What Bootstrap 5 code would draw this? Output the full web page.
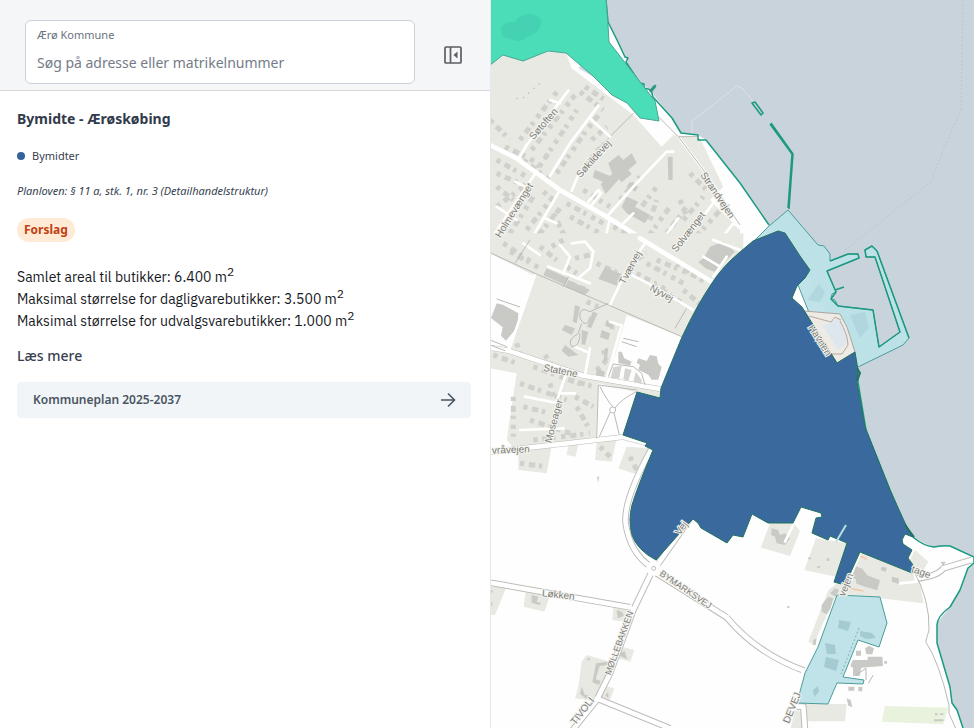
<!DOCTYPE html>
<html lang="da">
<head>
<meta charset="utf-8">
<meta name="viewport" content="width=device-width, initial-scale=1">
<title>Bymidte - Ærøskøbing</title>
<link href="https://cdn.jsdelivr.net/npm/bootstrap@5.3.0/dist/css/bootstrap.min.css" rel="stylesheet">
<style>
  body { font-family: "Noto Sans", "Open Sans", sans-serif; color: #374151; background: #fff; }
  .side-panel { flex: 0 0 calc(50% + 3px); }
  .panel-top { background: #f5f6f8; border-bottom: 1px solid #d6d8dc; padding: 20px 25px 6px; gap: 26px; }
  .search-box { border: 1px solid #cdd1d9; border-radius: 6px; padding: 6px 11px 8px; }
  .search-box label { font-size: 11px; line-height: 16px; color: #6b7280; }
  .search-box input { font-size: 14px; line-height: 24px; padding: 0; color: #374151; margin-top: 8px; }
  .search-box input::placeholder { color: #747b87; opacity: 1; }
  .search-box input:focus { outline: none; }
  .collapse-btn { width: 24px; height: 24px; line-height: 0; margin-top: 5px; }
  .panel-body { padding: 16px 19px 16px 17px; }
  .plan-title { font-size: 14px; line-height: 24px; font-weight: 700; margin-bottom: 16px; color: #323b4b; }
  .plan-kind { font-size: 11px; line-height: 18px; gap: 7px; margin-bottom: 17px; }
  .kind-dot { width: 8px; height: 8px; background: #35639b; }
  .plan-law { font-size: 11px; line-height: 18px; margin-bottom: 18px; }
  .plan-status { font-size: 12px; line-height: 18px; font-weight: 700; padding: 3px 7px; color: #bf4012; background: #ffead5; }
  .plan-facts { font-family: "IBM Plex Sans", Roboto, sans-serif; font-size: 14px; line-height: 22px; color: #15181d; margin: 24px 0 13px; }
  .plan-facts sup { font-size: 12px; line-height: 0; }
  .more-title { font-size: 14px; line-height: 22px; font-weight: 500; margin-bottom: 15px; }
  .plan-link { font-size: 12px; line-height: 20px; font-weight: 600; color: #4b5563; background: #f1f5f7; border-radius: 4px; padding: 8px 15px 8px 16px; }
  .map-pane { min-width: 0; border-left: 1px solid #e6e7ea; background: #fefefe; }
  .ground { fill: #e9e9e3; }
  .sea { fill: #c8d3dc; }
  .edge { fill: none; stroke: #bcbcb8; stroke-width: 17; stroke-linejoin: round; }
  .edge-wide { stroke-width: 20; }
  .street { fill: none; stroke: #fff; stroke-width: 8; stroke-linecap: round; stroke-linejoin: round; }
  .street-wide { stroke-width: 14; }
  .trail { fill: none; stroke: #bbb9b5; stroke-width: 3; }
  .house { fill: none; stroke: #d0d0cc; stroke-width: 15; stroke-dasharray: 13 14 19 11 10 17; }
  .block { fill: #c9c9c6; }
  .coast { fill: none; stroke: #1b9a80; stroke-width: 1.5; stroke-linejoin: round; }
  .harbour { fill: #bce1e7; fill-opacity: .95; stroke: #4b9d9b; stroke-width: 1; stroke-linejoin: round; }
  .map-names { font-family: "Liberation Sans", Arial, sans-serif; font-size: 10px; fill: #7c7c77; stroke: #f5f5f1; stroke-width: 2px; paint-order: stroke; text-anchor: middle; }
</style>
<script src="https://cdn.jsdelivr.net/npm/bootstrap@5.3.0/dist/js/bootstrap.bundle.min.js"></script>
</head>
<body>
<div class="d-flex vh-100 overflow-hidden">
  <aside class="side-panel d-flex flex-column bg-white">
    <header class="panel-top d-flex align-items-center">
      <div class="search-box flex-grow-1 bg-white d-flex flex-column">
        <label for="search">Ærø Kommune</label>
        <input id="search" type="text" class="border-0 w-100 bg-transparent" placeholder="Søg på adresse eller matrikelnummer">
      </div>
      <button type="button" class="collapse-btn btn p-0 border-0" aria-label="Skjul panel">
        <svg width="24" height="24" viewBox="0 0 24 24" fill="none" stroke="#5b5e63" stroke-width="1.700" aria-hidden="true"><rect x="4" y="4" width="16" height="16" rx="1"/><path d="M9.500 4v16"/><path d="M16.500 8.500v7L12.500 12z" fill="#5b5e63" stroke="none"/></svg>
      </button>
    </header>
    <main class="panel-body flex-grow-1 overflow-auto">
      <h1 class="plan-title">Bymidte - Ærøskøbing</h1>
      <div class="plan-kind d-flex align-items-center"><span class="kind-dot rounded-circle"></span><span>Bymidter</span></div>
      <p class="plan-law fst-italic">Planloven: § 11 a, stk. 1, nr. 3 (Detailhandelstruktur)</p>
      <div class="d-flex"><span class="plan-status rounded-pill">Forslag</span></div>
      <p class="plan-facts">Samlet areal til butikker: 6.400 m<sup>2</sup><br>Maksimal størrelse for dagligvarebutikker: 3.500 m<sup>2</sup><br>Maksimal størrelse for udvalgsvarebutikker: 1.000 m<sup>2</sup></p>
      <h2 class="more-title">Læs mere</h2>
      <a href="#kommuneplan" class="plan-link d-flex align-items-center justify-content-between text-decoration-none">
        <span>Kommuneplan 2025-2037</span>
        <svg width="16" height="16" viewBox="0 0 16 16" fill="none" stroke="#4b5563" stroke-width="1.6" aria-hidden="true"><path d="M1 8h13M8 1.500 14.500 8 8 14.500"/></svg>
      </a>
    </main>
  </aside>

  <section class="map-pane flex-grow-1" aria-label="Kort">
    <svg class="d-block w-100 h-100" viewBox="491 0 483 728" preserveAspectRatio="xMidYMid slice" role="img" aria-label="Kort over Ærøskøbing">
      <!-- north-western quarter -->
      <g transform="translate(490 0) scale(.333333)">
        <path class="ground" d="M0 195 45 165 100 183 170 155 228 158 245 205 430 345 515 440 550 405 630 415 700 560 660 600 750 690V760H0z"/>
        <path fill="#cfdbe3" d="m265 205 15-15 35 20 45 48z"/>
        <path class="house" d="M90 420 205 270M125 450 255 285M148 500 225 385 260 330M200 520 290 390 330 340M270 275 340 330M285 260 345 300M45 440 120 475 150 500M20 480 110 530M20 520 110 560M20 620 100 560M20 560 70 600M60 700 130 590M110 690 190 590M130 725 210 625M230 610 340 670M280 570 360 620M240 650 330 700M190 640 220 700M270 520 340 430M305 420 350 380M160 575 190 600M0 360 60 420M100 480 185 545M370 680 480 735M440 640 500 560M480 660 500 600M460 730 540 620M530 700 590 620M580 660 640 590M600 730 700 620M620 740 690 700M600 520 660 580M390 600 450 530M570 600 590 650M180 745 230 690"/>
        <path class="block" d="m355 490 30-25 15 15 25-20 15 28-25 22 10 12-30 25-8-10-40 45-15-30 35-30zM315 510l55 22-12 22-50-22zM410 590l35 15-10 15 45 25-15 25-55-30-15-20zM533 470h15v70h-13zM420 545l25 15-10 15-25-15z"/>
        <path fill="none" stroke="#cbcbc7" stroke-width="5" stroke-dasharray="5 16" d="m78 295 20 0 60-52"/>
        <path class="trail" d="m325 445 105-105"/>
        <path class="street street-wide" d="m-10 430 90 45 130 95 140 80 160 100"/>
        <path class="street" d="m85 478 25-43 125-163M180 528l60-98 85-113M300 355l60 55M245 572l20-47 20-20M355 645l75-85 100-105 20 0M565 410l75 100 105 155M510 730l55-75M600 700l85-110 55-50M0 722l135-200M210 570 105 750M360 655l-15 65-45 30-40-20-25 10-20-10M295 605l30-35 8 10-28 35M400 670l30-30M165 655l35 15M20 620l60 40M75 545l30 15M180 300l30 10M690 720l40-50 30 20"/>
        <path class="trail" d="m505 350 60 60 75 100 110 165M565 410l60 0"/>
        <path fill="none" stroke="#d6d9da" stroke-width="5" d="m605 400v-40l110-90 30-15"/>
      </g>
      <!-- western quarter -->
      <g transform="translate(490 240) scale(.333333)">
        <path class="ground" d="M0-20h760V30L665 130 575 290 410 225 355 415 510 442 512 475 325 430 318 590 185 620 170 700 85 690 85 640 50 600 80 400 0 385V330l50 8 85-230L0 40zM320 610l60-15-15 70-50-5zM410 620l75 5-40 80-60-20zM235 615l30-5-8 40-27-5z"/>
        <path class="house" d="M40 10 130 70M60 35 150 85M150 20 200 60M185 20 220 0M255 55 300 45M230 80 260 100M165 100 290 150M320 70 385 100M420 70 470 40M440 100 530 150M470 70 580 130M500 60 620 110M560 70 650 130M580 150 640 200M490 135 580 190M10 345 80 370M130 380 280 435M240 420 310 440M90 430 230 480M70 470 70 590M100 500 180 520M120 540 240 580M130 600 300 580M260 500 300 570M180 430 190 470M255 470 310 500M80 310 90 340M165 345 185 375M340 330 350 360M320 390 350 360M90 670 170 680M330 620 360 650M420 650 440 690M360 260 395 260M290 185 325 200"/>
        <path class="block" d="m20 190 20 5 45 25-2 40-35 42-15-15 5-25-35-28zM385 335l10 0 8 20 22 10-5 12-35-8zM445 355l25 8 10-18 20 4 5 22 10 10-10 38-20 0-10-15-30-15 5-15-10-5zM345 82l50 20-15 35-55-20zM640 55l20-35 40-15 35 30-40 40-20 20-25-8-25-20zM170 85l65 30-10 20-65-30zM235 120l65 30-15 15-60-25zM255 195l15 5-10 50-12-5zM308 215l15 5-20 45-12-5zM225 255l30 10-10 20-30-15zM225 315l40 30-30 5-20-18zM275 270l20 5-10 40-10-2zM335 270l25 10-5 20-25-8zM345 325l10 0-5 40-10 0zM320 385l25 10-5 20-22-8zM350 240l20 10-5 15-20-8z"/>
        <path class="edge" d="M-5 322 55 332 280 407 510 447M-10 637l160-18 250-28 75 20"/>
        <path class="street street-wide" d="M450-5 665 125M-5 322l60 10 225 75 230 40M-10 637l160-18 250-28 75 20"/>
        <path class="street" d="M55 335 135 105M465 10l-50 70-55 115M415 100l60 30 135 80M285 405l15-80M255 320l35 15M350 415l45-160M360 245l35 12M220 100l20-50-30-35M245 10l40-5 25 30-10 50-30 25M175 80l125 50M105 470l90 18M90 570l130-5M215 460h40M225 410l-25 75M100 10l50 35M640 50l50 30M670 110l40-60M670 0l80 30"/>
        <path class="trail" d="M0 38l135 62 225 97 215 93M120 0 75 70M20 177l70 24M0 300l50 20M0 315l45 17M400 295l45 10M395 305l45 15M590 205l-35 60M355 190l-55 25q-35-20-30 20 20 35 30-5M275 250l-10 30q-35 20-20 40 25 0 25-40M235 110l-15 30M325 435l-5 160M325 435l115 15M330 440q20 40 38 60l-40 90M440 455q-45 20-70 55l18 75"/>
        <circle cx="368" cy="510" r="9" fill="#fff" stroke="#bbb" stroke-width="3"/>
        <path fill="#d4d4d0" d="m370 382 25-5-8 40-25-3zM405 385l20 5-10 33-15-5zM437 395l18 25v12l-25-6zM320 712l8-4-3 20z"/>
        <path class="trail" d="m355 410 15-38 60 8 25 20 10 35"/>
      </g>
      <!-- southern quarter, west -->
      <g transform="translate(490 480) scale(.333333)">
        <path class="ground" d="M0 320h50L15 405H0zM108 325l75 15-20 55-62-15zM370 380l45 10-10 35-38-5zM395 500l38 10-12 35-38-10zM290 525l70 20-10 80-15 40-80-10 10-35 10-75zM335 615l38 10-18 48-30-12z"/>
        <path class="block" d="m125 345 20 5-5 15 12 3-2 8-25-8zM380 390l15 5 8 12-20 8zM392 518l12-5 8 25-22-10zM318 550l38-5-2 10-25 3-12 40 15 5-5 12-20-8zM275 620l10 25 10 0-5 12-20-15zM0 333l8-3v10zM0 370l7-4v14zM345 645l10-8v18zM292 535h8v6h-8z"/>
        <path class="edge edge-wide" d="M483-90Q400 60 407 130 420 220 485 262M0 308 420 382M490 265 430 390 360 580 320 660 240 760M500 280 710 412M495 265 600 115M320 655 540 745"/>
        <path class="street street-wide" d="M483-90Q400 60 407 130 420 220 485 262M0 308 420 382M490 265 430 390 360 580 320 660 240 760M500 280 710 412M495 265 600 115M320 655 540 745"/>
        <circle cx="491" cy="265" r="22" fill="#fff"/><circle cx="491" cy="265" r="6" fill="#fff" stroke="#bbb" stroke-width="3"/>
      </g>
      <!-- southern quarter, east -->
      <g transform="translate(730 480) scale(.333333)">
        <path class="ground" d="m120 130 70-2 20 25-30 75-88-25zM258 175l95 15-35 100-95-20zM390 215l150 60 25 5 15 90-260-30-70 155-15-10 60-155 25-20zM555 210l40 35-15 25-45-20zM225 672l125 0-5 52H225zM195 690l20 5 5 60h-40z"/>
        <path fill="#e9f2dc" d="M465 678l190 5-15 50-185-8z"/>
        <path class="block" d="m125 145 20 5 5 15 15-5 15 15-15 20-25-5-5-20-12-5zM375 258l22 8 15 20 38 15-8 30-44-13-20-8 0-12-18-8zM455 260l15 3-3 12-15-5zM485 290l20 5 3 18-22-8zM300 340l15-15 12 5-10 20zM275 375l20-25 15 5-8 30-12 18-15-8zM250 480l10-5-3 20h-8zM368 540l45 0 0-10 44 0 2 28-65 5-5 25-20 0 0-25-8-5zM405 505l12-8 15 8-5 18-18 0zM378 512l15 0v15h-15zM355 620h18v12h-18zM385 620h12v14h-12zM350 655l12 5 5 22-12-5zM632 245l15 0-8 15zM463 543h8v8h-8zM172 378h6v6h-6zM235 232h8v6h-8zM290 235h8v8h-8zM262 258h8v6h-8zM615 700h8v6h-8M630 700h10v5h-10M612 718h28v6h-28"/>
        <path fill="none" stroke="#f1c9aa" stroke-width="5" d="m390 228 20 10M360 325l40 8"/>
        <path class="edge edge-wide" d="M-10 412Q80 520 222 572M200 680h20l5 70M560 295q60-5 80-30l85-25"/>
        <path class="street street-wide" d="M-10 412Q80 520 222 572L200 660 165 750M200 680h20l5 70M560 295q60-5 80-30l85-25"/>
        <path class="street" d="m510 310 50-5-8-40M390 220 340 340M165 185l25-50"/>
        <path class="trail" d="M550 270Q600 360 597 450l-10 35q40 60 70 190v25l20 45M378 585l30-20 0 35M415 610l15-25"/>
      </g>

      <!-- sea -->
      <path class="sea" d="M606 0 608 22 617 40 626 58 628 64 641 83 650 90 656 98 672 118 681 133 698 135 706 140 740 183 769 225 800 262 858 370 858 382 866 430 890 490 906 528 914 538 932 547 950 546 974 557V0zM974 564 968 568 960 590 950 607 937 623 937 643 950 687 952 703 957 710 963 728H974z"/>
      <path fill="none" stroke="#dfe1e1" d="m692 134 0-13 45-35 5 2 11 13"/>
      <path fill="none" stroke="#b4bfc9" stroke-dasharray="2 2" stroke-width=".7" d="m963 0-2 110-18 40-12 32-86 68"/>
      <path class="coast" d="M606 0 608 22 617 40 625 57l3 1-2 4 14 21 4 1 0 4 7 2 5-5M651 90l2 7 19 21 9 15 17 2 0 5 8 0 34 43 29 42M858 370l0 12 8 48 24 60 16 38 8 10q10 8 20 9 10-2 16-1l24 11v6l-6 5-8 22-10 17q-14 10-13 20l0 16 13 44 2 16 5 7 6 18M752 103l3-1 8 11-2 2zM770 124l22 30-4 54M771 123l22 31-4 55"/>
      <path fill="none" stroke="#2b9783" stroke-width="3" d="m650 92 5-6"/>

      <!-- plan areas -->
      <path fill="#4addb7" stroke="#4aa692" d="M490-1H606L608 25 609 42 637 78 655 101 659 121 640 118 627 103 612 95 593 76 566 53 548 51 523 61 503 55 489 66z"/>
      <path fill="#42cdb0" opacity=".7" d="M501 28q4-7 14-6 4-8 15-8 12 2 11 9-1 10-14 14-7 7-15 2-11 1-11-11z"/>
      <path class="harbour" stroke-width="1.5" d="M752 243 769 226 788 210 818 245 824 246 830 254V261L848 254 858 254 859 258 827 271 836 292 832 294 831 299 835 300 838 306 873 310 879 347 900 332 875 257 866 257 865 250 872 246 877 251 909 338 903 345 858 367 820 340 780 240z"/>
      <path class="coast" d="M830 261 848 254 858 254 859 258 827 271 836 292 831 299 838 306 873 310 879 347 900 332 875 257 866 257 865 250 872 246 877 251 909 338M835 290l9-3"/>
      <path fill="#a9cfd9" d="m807 300 12-16 6 8-5 10zM850 315l15-3 4 16-9 10z" opacity=".6"/>
      <path fill="#eeebe6" stroke="#aca69e" d="M804 311 840 314 847 327 855 352 837 363z"/>
      <path fill="#dee6ee" d="m823 326 17-9 8 25-10 8z"/>
      <path fill="none" stroke="#b5a99f" d="m809 316 22 6 4-5 6 3M840 321q8 14 8 24l-6 9-10 0"/>
      <path fill="#3a6a9d" stroke="#20735f" stroke-linejoin="round" d="M778 231 785 233 800 256 810 270 805 278 797 286 792 298 802 307 807 315 837 363 855 352 858 370 857 382 865 427 890 490 905 523 913 537 905 534 902 540 903 544 912 550 908 558 913 565 912 573 860 552 845 585 834 582 847 543 830 536 828 540 812 533 816 518 822 517 821 513 801 507 793 523 768 523 752 514 743 537 733 535 727 543 701 528 698 523 693 519 687 525 656 560Q637 550 632 535 628 520 632 505 637 488 653 450L645 446 647 443 623 435 637 392 660 398 661 388 682 337Q697 305 712 283 723 266 740 252L753 241z"/>
      <path fill="none" stroke="#20735f" stroke-width="2" d="m857 368 3 5-3 8M905 525l9 12"/>
      <path fill="none" stroke="#b9e1de" stroke-width="2" d="m836 542 10-17"/>
      <path class="harbour" d="M837 595 880 597 887 623 879 647 858 640 843 677 864 680 863 684 837 683 828 704 797 703 805 673 818 647z"/>
      <path fill="#a5cbd2" d="m860 631 12 2 4 5-10 1-6-3zM825 643l10 2 1 9-9 0zM826 657l13 3-3 11-12-4zM839 620l12 2-3 9-10-3zM813 690l5-4 1 6-5 5z"/>
      <path fill="none" stroke="#88aeb4" stroke-dasharray="2 2" d="m859 628-18 46"/>

      <!-- street names -->
      <g class="map-names">
        <text transform="translate(546 126) rotate(-49)">Søtoften</text>
        <text transform="translate(596 161) rotate(-48)">Søkildevej</text>
        <text transform="translate(517 212) rotate(-58)">Holmevænget</text>
        <text transform="translate(715 197) rotate(56)">Strandvejen</text>
        <text transform="translate(691 234) rotate(-52)">Solvænget</text>
        <text transform="translate(633 269) rotate(-62)">Tværvej</text>
        <text transform="translate(660 296) rotate(29)">Nyvej</text>
        <text transform="translate(560 374) rotate(11)">Statene</text>
        <text transform="translate(557 422) rotate(-75)">Moseager</text>
        <text transform="translate(511 453) rotate(-2)">vråvejen</text>
        <text transform="translate(558 598) rotate(6)">Løkken</text>
        <text transform="translate(684 592) rotate(34)" font-size="9">BYMARKSVEJ</text>
        <text transform="translate(622 644) rotate(-70)" font-size="9">MØLLEBAKKEN</text>
        <text transform="translate(585 713) rotate(-52)">TIVOLI</text>
        <text transform="translate(684 530) rotate(-54)">Vej</text>
        <text transform="translate(849 586) rotate(-68)">vejen</text>
        <text transform="translate(920 575) rotate(20)">tage</text>
        <text transform="translate(795 709) rotate(-68)">DEVEJ</text>
        <text transform="translate(817 342) rotate(58)">Havnen</text>
      </g>
    </svg>
  </section>
</div>
</body>
</html>
